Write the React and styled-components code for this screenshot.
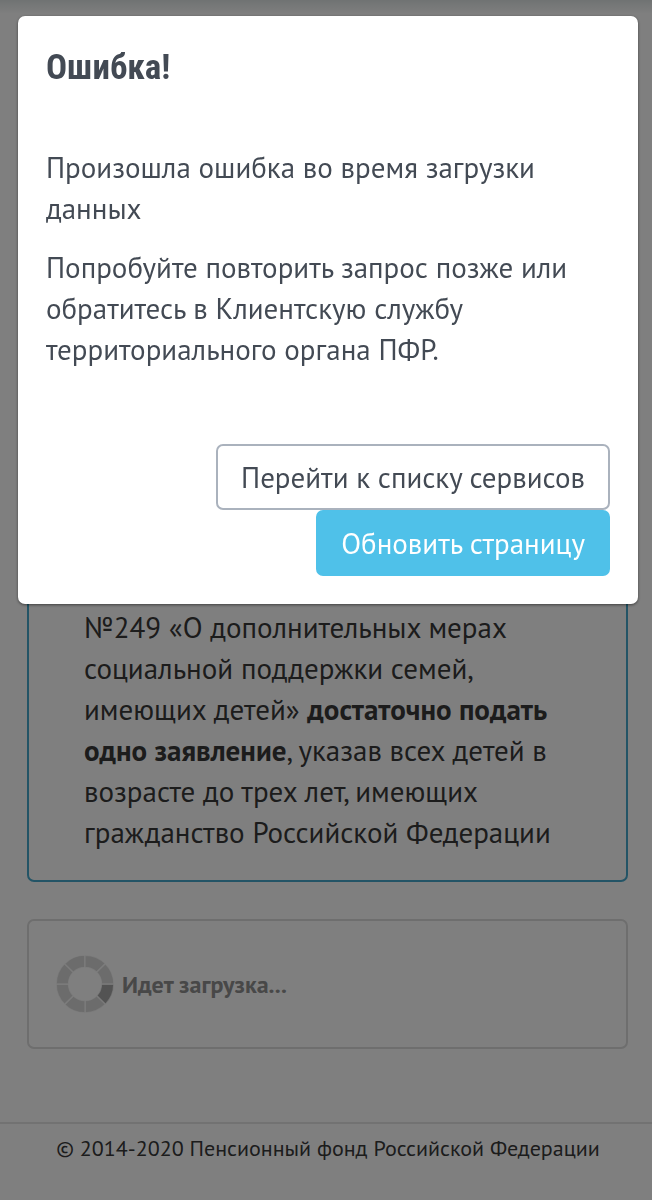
import styled, { createGlobalStyle } from "styled-components"

// Define Styling
const GlobalStyle = createGlobalStyle`
    * {
        box-sizing: border-box;
    }
    body {
        margin: 0;
        background-color: #ffffff;
        color: #383838;
        font-family: "PT Sans", "Noto Sans", sans-serif;
        font-size: 29px;
        line-height: 41px;
    }
    p, h1 {
        margin: 0;
    }
`
const Page = styled.div`
    min-height: 100vh;
    display: flex;
    flex-direction: column;
    background-image: linear-gradient(#e0e6e6, #ffffff 14px);
`
const Main = styled.main`
    display: flex;
    flex-direction: column;
    gap: 37px;
    padding: 40px 24px 73px 27px;
`
const Card = styled.section`
    border: 2px solid ${props => props.$info ? "#46a9cc" : "#dcdcdc"};
    border-radius: 7px;
    padding: ${props => props.$info ? "565px 48px 27px 55px" : "34px 27px"};
`
const Loading = styled.div`
    display: flex;
    align-items: center;
    gap: 8px;
    color: #909090;
    font-size: 24px;
    font-weight: 700;
`
const Footer = styled.footer`
    flex: 1;
    border-top: 2px solid #e4e4e4;
    padding: 7px 16px 7px 20px;
    font-size: 22px;
    line-height: 34px;
    text-align: center;
`
const Overlay = styled.div`
    position: fixed;
    inset: 0;
    padding: 16px 14px 16px 18px;
    background-color: rgba(0, 0, 0, 0.5);
    overflow: auto;
`
const Modal = styled.div`
    padding: 31px 28px 28px;
    border-radius: 7px;
    background-color: #ffffff;
    box-shadow: 0 1px 3px rgba(0, 0, 0, 0.5);
    color: #434a54;
`
const Title = styled.h1`
    margin-bottom: 59px;
    font-family: "Roboto Condensed", Roboto, sans-serif;
    font-size: 35px;
    font-weight: 700;
`
const Desc = styled.p`
    margin-bottom: 18px;
`
const Actions = styled.div`
    display: flex;
    flex-direction: column;
    align-items: flex-end;
    padding-top: 56px;
`
const Button = styled.button`
    height: 66px;
    padding: 0 23px;
    border: 2px solid ${props => props.$primary ? "#4fc1e9" : "#aab2bd"};
    border-radius: 7px;
    background-color: ${props => props.$primary ? "#4fc1e9" : "#ffffff"};
    color: ${props => props.$primary ? "#ffffff" : "#434a54"};
    font: inherit;
    cursor: pointer;
`

const segments = [0, 1, 2, 3, 4, 5, 6, 7]

// Ring of eight segments, the first one is highlighted
const Spinner = () => {
  return (
    <svg width="58" height="58" viewBox="-29 -29 58 58" aria-hidden="true">
        {segments.map((item) => (
            <path
                key={item}
                d="M16.5 0H28.8A28.8 28.8 0 0 1 20.4 20.4L11.7 11.7A16.5 16.5 0 0 0 16.5 0Z"
                fill={item === 0 ? "#a6a6a6" : "#d8d8d8"}
                stroke="#ffffff"
                strokeOpacity="0.7"
                strokeWidth="1.4"
                transform={`rotate(${item * 45})`}
            />
        ))}
    </svg>
  )
}

const App = () => {
  return (
    <>
        <GlobalStyle />
        <Page>
            <Main>
                <Card $info>
                    <p>
                        №249 «О дополнительных мерах социальной поддержки семей, имеющих
                        детей» <strong>достаточно подать одно заявление</strong>, указав всех
                        детей в возрасте до трех лет, имеющих гражданство Российской Федерации
                    </p>
                </Card>
                <Card>
                    <Loading role="status">
                        <Spinner />
                        Идет загрузка...
                    </Loading>
                </Card>
            </Main>
            <Footer>© 2014-2020 Пенсионный фонд Российской Федерации</Footer>
        </Page>
        <Overlay>
            <Modal role="dialog" aria-modal="true" aria-labelledby="error-title">
                <Title id="error-title">Ошибка!</Title>
                <Desc>Произошла ошибка во время загрузки данных</Desc>
                <Desc>
                    Попробуйте повторить запрос позже или обратитесь в Клиентскую службу
                    территориального органа ПФР.
                </Desc>
                <Actions>
                    <Button type="button">Перейти к списку сервисов</Button>
                    <Button type="button" $primary>Обновить страницу</Button>
                </Actions>
            </Modal>
        </Overlay>
    </>
  )
}

export default App
